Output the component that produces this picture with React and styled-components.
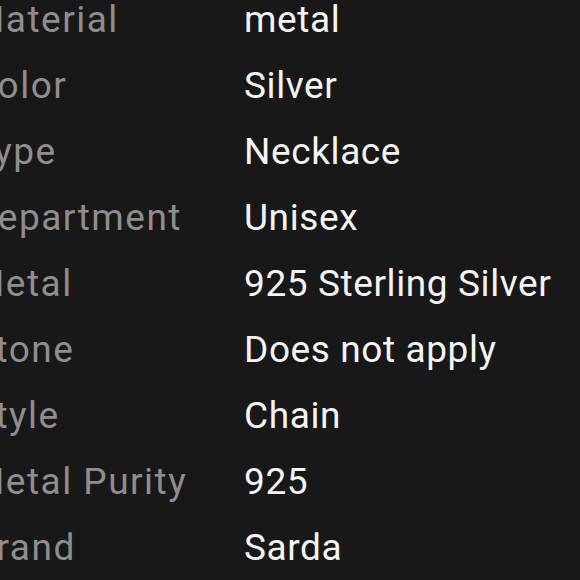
import React from 'react';
import styled, { createGlobalStyle } from 'styled-components';

const Global = createGlobalStyle`
  html, body {
    margin: 0;
    padding: 0;
    background: #181818;
  }
  body {
    font-family: Roboto, "Liberation Sans", sans-serif;
    overflow: hidden;
  }
`;

const specs = [
  ['Material', 'metal'],
  ['Color', 'Silver'],
  ['Type', 'Necklace'],
  ['Department', 'Unisex'],
  ['Metal', '925 Sterling Silver'],
  ['Stone', 'Does not apply'],
  ['Style', 'Chain'],
  ['Metal Purity', '925'],
  ['Brand', 'Sarda'],
];

const Page = styled.div`
  width: 580px;
  height: 580px;
  overflow: hidden;
  background: #181818;
`;

const Table = styled.dl`
  margin: -14px 0 0 -28px;
  display: grid;
  grid-template-columns: 272px 1fr;
  grid-auto-rows: 66px;
  align-items: center;
`;

const Label = styled.dt`
  color: #8e8e8e;
  font-size: 37px;
  letter-spacing: 1.5px;
  white-space: nowrap;
`;

const Value = styled.dd`
  margin: 0;
  color: #f4f4f4;
  font-size: 37px;
  letter-spacing: 0.6px;
  white-space: nowrap;
`;

export default function App() {
  return (
    <Page>
      <Global />
      <Table>
        {specs.map(([k, v]) => (
          <React.Fragment key={k}>
            <Label>{k}</Label>
            <Value>{v}</Value>
          </React.Fragment>
        ))}
      </Table>
    </Page>
  );
}
